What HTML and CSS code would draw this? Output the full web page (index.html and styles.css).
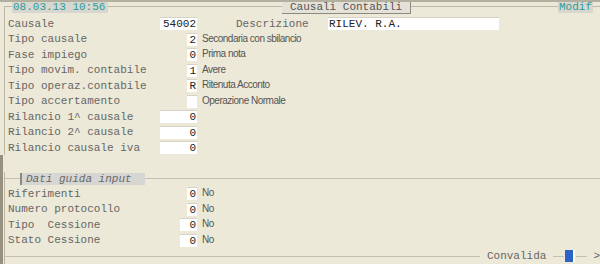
FILE: index.html
```html
<!DOCTYPE html>
<html lang="it">
<head>
    <meta charset="UTF-8">
    <title>Causali Contabili</title>
    <link rel="stylesheet" href="styles.css">
</head>
<body>
    <div class="screen">
        <div class="topbar">
            <div class="corner"></div>
            <div class="date">08.03.13 10:56</div>
            <div class="rule gap"></div>
            <div class="title">Causali Contabili</div>
            <div class="rule"></div>
            <div class="mode">Modif</div>
            <div class="rule tail"></div>
        </div>

        <div class="upper">
            <div class="row">
                <span class="label">Causale</span>
                <span class="field"><span class="input w37">54002</span></span>
                <span class="label desc-label">Descrizione</span>
                <span class="input left w171">RILEV. R.A.</span>
            </div>
            <div class="row">
                <span class="label">Tipo causale</span>
                <span class="field"><span class="input w10">2</span></span>
                <span class="note">Secondaria con sbilancio</span>
            </div>
            <div class="row">
                <span class="label">Fase impiego</span>
                <span class="field"><span class="input w10">0</span></span>
                <span class="note">Prima nota</span>
            </div>
            <div class="row">
                <span class="label">Tipo movim. contabile</span>
                <span class="field"><span class="input w10">1</span></span>
                <span class="note">Avere</span>
            </div>
            <div class="row">
                <span class="label">Tipo operaz.contabile</span>
                <span class="field"><span class="input w10">R</span></span>
                <span class="note">Ritenuta Acconto</span>
            </div>
            <div class="row">
                <span class="label">Tipo accertamento</span>
                <span class="field"><span class="input w10"></span></span>
                <span class="note">Operazione Normale</span>
            </div>
            <div class="row">
                <span class="label">Rilancio 1^ causale</span>
                <span class="field"><span class="input w37">0</span></span>
            </div>
            <div class="row">
                <span class="label">Rilancio 2^ causale</span>
                <span class="field"><span class="input w37">0</span></span>
            </div>
            <div class="row">
                <span class="label">Rilancio causale iva</span>
                <span class="field"><span class="input w37">0</span></span>
            </div>
        </div>

        <div class="lower">
            <div class="lower-inner">
                <div class="section">
                    <div class="rule lead"></div>
                    <div class="section-title">Dati guida input</div>
                    <div class="rule"></div>
                </div>
                <div class="row">
                    <span class="label">Riferimenti</span>
                    <span class="field"><span class="input w10">0</span></span>
                    <span class="note">No</span>
                </div>
                <div class="row">
                    <span class="label">Numero protocollo</span>
                    <span class="field"><span class="input w10">0</span></span>
                    <span class="note">No</span>
                </div>
                <div class="row">
                    <span class="label">Tipo  Cessione</span>
                    <span class="field"><span class="input w17">0</span></span>
                    <span class="note">No</span>
                </div>
                <div class="row">
                    <span class="label">Stato Cessione</span>
                    <span class="field"><span class="input w17">0</span></span>
                    <span class="note">No</span>
                </div>

                <div class="footer">
                    <div class="rule"></div>
                    <span class="confirm">Convalida</span>
                    <div class="rule short"></div>
                    <div class="cursor"></div>
                    <div class="rule short"></div>
                    <span class="arrow">&gt;</span>
                </div>
            </div>
        </div>
    </div>
</body>
</html>
```

FILE: styles.css
```css
body {
    margin: 0;
    padding: 0;
    background-color: #ece9d8;
    font-family: "Liberation Mono", "Courier New", monospace;
    font-size: 11px;
}

.screen {
    width: 600px;
    height: 264px;
    background-color: #ece9d8;
    border-top: 2px solid #b4b0a0;
    box-sizing: border-box;
    display: flex;
    flex-direction: column;
    overflow: hidden;
}

/* Barra superiore */
.topbar {
    display: flex;
    height: 11px;
    padding-left: 4px;
}

.corner {
    width: 7px;
    margin-top: 4px;
    border-top: 1px solid #bcb8a8;
    border-left: 1px solid #bcb8a8;
}

.rule {
    flex: 1;
    height: 1px;
    margin-top: 4px;
    background-color: #bcb8a8;
}

.rule.gap {
    flex: 0 0 174px;
}

.rule.tail {
    flex: 0 0 7px;
}

.date,
.mode {
    background-color: #d8d7cf;
    color: #2f9a9a;
    height: 12px;
    line-height: 12px;
    margin-top: -1px;
    padding: 0 1px;
}

.date {
    width: 94px;
}

.title {
    height: 11px;
    line-height: 11px;
    margin-top: -1px;
    padding: 0 8px;
    background-color: #e4e2d8;
    color: #555;
    border-top: 1px solid #f4f3ee;
    border-right: 1px solid #8c8a80;
    border-bottom: 1px solid #8c8a80;
}

/* Campi */
.upper {
    margin-left: 4px;
    border-left: 1px solid #bcb8a8;
    padding: 3px 0 0 3px;
    height: 139px;
}

.row {
    display: flex;
    align-items: center;
    height: 15.5px;
}

.label {
    width: 152px;
    color: #666;
    white-space: pre;
}

.field {
    width: 37px;
    display: flex;
    justify-content: flex-end;
}

.input {
    height: 12px;
    line-height: 13px;
    background-color: #fff;
    border-top: 1px solid #d6d3c6;
    color: #222;
    text-align: right;
    box-sizing: content-box;
    padding-right: 1px;
}

.input.left {
    text-align: left;
    padding: 0 0 0 1px;
}

.w10 { width: 9px; }
.w17 { width: 16px; }
.w37 { width: 36px; }
.w171 { width: 170px; }

.desc-label {
    width: 92px;
    margin-left: 39px;
}

.note {
    margin-left: 5px;
    margin-top: -2px;
    font-family: "Liberation Sans", Arial, sans-serif;
    font-size: 10px;
    letter-spacing: -0.5px;
    color: #555;
}

/* Sezione inferiore */
.lower {
    flex: 1;
    border-left: 3px solid #96927f;
    padding-top: 17px;
    display: flex;
}

.lower-inner {
    flex: 1;
    margin-left: 1px;
    border-left: 1px solid #bcb8a8;
    padding-left: 3px;
    display: flex;
    flex-direction: column;
}

.section {
    display: flex;
    align-items: center;
    height: 13px;
    margin-left: -3px;
}

.section .rule,
.footer .rule {
    margin-top: 0;
    background-color: #c4c0b2;
}

.section .rule.lead {
    flex: 0 0 15px;
}

.section-title {
    width: 119px;
    height: 12px;
    line-height: 12px;
    padding-left: 4px;
    background-color: #d6d6d2;
    border-left: 2px solid #8a8a84;
    color: #666;
    font-style: italic;
}

.section + .row {
    margin-top: 1px;
}

.footer {
    display: flex;
    align-items: center;
    flex: 1;
    margin-left: -3px;
}

.confirm {
    margin: 0 7px;
    color: #666;
}

.rule.short {
    flex: 0 0 11px;
}

.cursor {
    width: 8px;
    height: 12px;
    margin: 0 1px;
    background-color: #2f62c8;
    border-right: 2px solid #fdfde0;
}

.arrow {
    margin-left: 6px;
    color: #666;
}
```
